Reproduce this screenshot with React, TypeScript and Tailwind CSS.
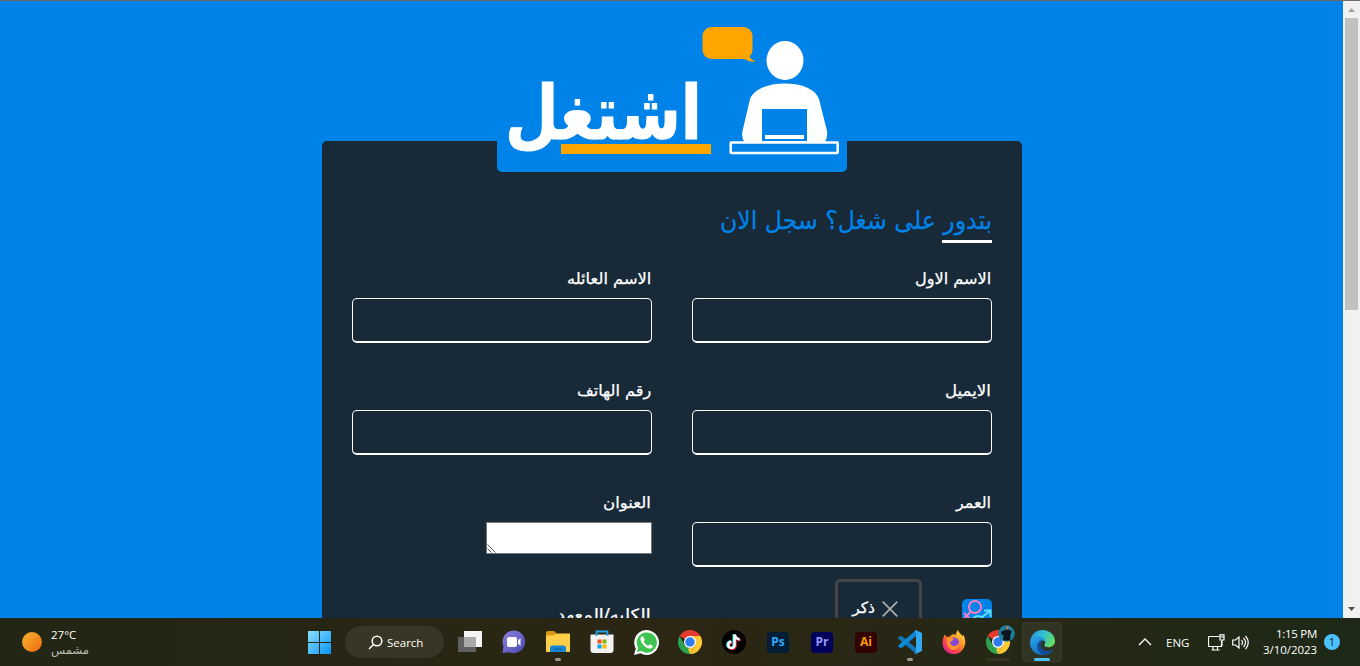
import { useLayoutEffect, useRef, useState, type ReactNode } from "react";

const arabic = "font-['DejaVu_Sans',sans-serif]";

/** Arabic line condensed horizontally so that it takes exactly `width` pixels. */
function ArabicText({ width, className = "", children }: { width: number; className?: string; children: ReactNode }) {
  const ref = useRef<HTMLSpanElement>(null);
  const [scale, setScale] = useState(1);
  useLayoutEffect(() => {
    if (ref.current) setScale(width / ref.current.offsetWidth);
  }, [width]);
  return (
    <span dir="rtl" className="flex justify-start" style={{ width }}>
      <span
        ref={ref}
        className={`inline-block shrink-0 origin-right whitespace-nowrap ${arabic} ${className}`}
        style={{ transform: `scaleX(${scale})` }}
      >
        {children}
      </span>
    </span>
  );
}

function Logo() {
  return (
    <svg width="350" height="171" viewBox="497 1 350 171" className="block">
      <rect x="702.500" y="27" width="50" height="32" rx="9" fill="#ffa500" />
      <path d="M743 58 Q748 62 756 62 Q751 60 748.500 55Z" fill="#ffa500" />
      <text
        x="505"
        y="139"
        textLength="197"
        lengthAdjust="spacingAndGlyphs"
        direction="ltr"
        className="font-['DejaVu_Sans',sans-serif]"
        fontSize="75"
        fontWeight="700"
        fill="#fff"
        stroke="#fff"
        strokeWidth="1"
        strokeLinejoin="round"
      >
        اشتغل
      </text>
      <rect x="561" y="144" width="150" height="10" fill="#ffa500" />
      <ellipse cx="785" cy="60.500" rx="18.500" ry="19.500" fill="#fff" />
      <path
        d="M745 143 Q741 138 742.500 131 L750 99 C754 89 768 83.500 785 83.500 C802 83.500 815 89 819 99 L827 131 Q828 138 824 143Z"
        fill="#fff"
      />
      <path d="M762 109h45v32h-45z" fill="#0083e8" />
      <path d="M765 135h39v4h-39z" fill="#fff" />
      <rect x="730.700" y="142.500" width="107" height="10.500" rx=".5" fill="#0083e8" stroke="#fff" strokeWidth="2.500" />
    </svg>
  );
}

function Label({ width, children }: { width: number; children: ReactNode }) {
  return (
    <label className="flex h-[37px] items-center pr-px text-white">
      <ArabicText width={width} className="text-[15.500px] leading-[37px] [-webkit-text-stroke:0.25px_white]">
        {children}
      </ArabicText>
    </label>
  );
}

function Field({ label, width }: { label: string; width: number }) {
  return (
    <div className="h-28">
      <Label width={width}>{label}</Label>
      <input className="block h-[45px] w-[300px] rounded-[5px] border border-b-2 border-white bg-transparent px-3 text-white outline-none" />
    </div>
  );
}

function GenderRow() {
  return (
    <div className="-mt-[18px] flex items-start">
      <svg width="30" height="30" viewBox="0 0 30 30" className="mt-5 shrink-0">
        <rect width="30" height="30" rx="5" fill="#0083e8" />
        <g fill="none" strokeWidth="2">
          <circle cx="13" cy="8" r="6" stroke="#f57fc0" />
          <path d="M9 12.500 2 19.500M2 14l6 6" stroke="#f57fc0" />
          <path d="M20 18 28 12M22 11.500h6.500v6.500" stroke="#5fe0ff" />
          <circle cx="16" cy="23" r="6" stroke="#5fe0ff" />
        </g>
      </svg>
      <div className="mr-10 flex h-[60px] w-[87px] items-center gap-[7px] rounded-[5px] border-[3px] border-[#444] pr-[21px] text-white">
        <svg width="16" height="16" viewBox="0 0 16 16" fill="none" stroke="#aaa" strokeWidth="1.800">
          <path d="M.7.7l14.600 14.600M15.300.7.7 15.300" />
        </svg>
        <ArabicText width={23} className="text-[15.500px] [-webkit-text-stroke:0.25px_white]">ذكر</ArabicText>
      </div>
    </div>
  );
}

function Page() {
  return (
    <main className="h-full min-w-0 flex-1 overflow-hidden bg-[#0083e8]">
      <div className="relative z-10 -mb-[31px] ml-[497px] w-[350px] overflow-hidden rounded-b-[5px] bg-[#0083e8]">
        <Logo />
      </div>
      <section dir="rtl" className="mr-[321px] ml-[322px] h-[600px] rounded-t-[5px] bg-[#182938] px-[30px] pt-[58px]">
        <h1 className="h-[44px] text-[#0083e8]">
          <ArabicText width={272} className="h-[41px] text-[25.500px] leading-[43px] [-webkit-text-stroke:0.25px_#0083e8]">
            بتدور على شغل؟ سجل الان
          </ArabicText>
          <span className="block h-[3px] w-[50px] bg-white" />
        </h1>
        <form className="flex gap-10 pt-[18px]">
          <div className="w-[300px]">
            <Field label="الاسم الاول" width={76} />
            <Field label="الايميل" width={46} />
            <Field label="العمر" width={35} />
            <GenderRow />
          </div>
          <div className="w-[300px]">
            <Field label="الاسم العائله" width={84} />
            <Field label="رقم الهاتف" width={74} />
            <div className="h-28">
              <Label width={48}>العنوان</Label>
              <div className="flex h-8 w-[166px] items-end justify-end border border-[#767676] bg-white">
                <svg width="9" height="9" viewBox="0 0 9 9" stroke="#555" strokeWidth="1">
                  <path d="M.5.5l8 8M.5 4.500l4 4" />
                </svg>
              </div>
            </div>
            <Field label="الكليه/المعهد" width={94} />
          </div>
        </form>
      </section>
    </main>
  );
}

function Scrollbar() {
  return (
    <div className="flex w-[17px] shrink-0 flex-col items-center bg-[#f1f1f1]">
      <svg width="17" height="17" viewBox="0 0 17 17" className="shrink-0">
        <path d="M5 11h7L8.500 7z" fill="#a3a3a3" />
      </svg>
      <div className="h-[292px] w-[13px] bg-[#c1c1c1]" />
      <svg width="17" height="17" viewBox="0 0 17 17" className="mt-auto shrink-0">
        <path d="M5 6h7L8.500 10z" fill="#505050" />
      </svg>
    </div>
  );
}

function Windows() {
  return (
    <svg width="24" height="24" viewBox="0 0 24 24">
      <defs>
        <linearGradient id="win" x1="0" y1="0" x2="1" y2="1">
          <stop stopColor="#8be0ff" />
          <stop offset="1" stopColor="#0794f5" />
        </linearGradient>
      </defs>
      <path fill="url(#win)" d="M1 1h11v11H1zM13 1h11v11H13zM1 13h11v11H1zM13 13h11v11H13z" />
    </svg>
  );
}

function TaskView() {
  return (
    <svg width="24" height="24" viewBox="0 0 24 24">
      <path d="M6 1h18v16H6z" fill="#f4f4f4" />
      <path d="M0 7h18v15H0z" fill="#606060" />
      <path d="M6 7h12v10H6z" fill="#a9a9a9" />
    </svg>
  );
}

function Chat() {
  return (
    <svg width="24" height="24" viewBox="0 0 24 24">
      <defs>
        <linearGradient id="chat" x1="0" y1="0" x2="1" y2="1">
          <stop stopColor="#8b80d8" />
          <stop offset=".5" stopColor="#6d66cc" />
          <stop offset="1" stopColor="#4446a5" />
        </linearGradient>
      </defs>
      <path d="M.5 23 1.500 16.500A11.300 11.300 0 1 1 7.500 22.300z" fill="url(#chat)" />
      <rect x="5" y="7" width="10" height="10" rx="2" fill="#fff" />
      <path d="M16 10.500 18.500 8v8L16 13.500z" fill="#fff" />
    </svg>
  );
}

function Explorer() {
  return (
    <svg width="26" height="24" viewBox="0 0 26 24">
      <path d="M1 3a2 2 0 0 1 2-2h6l2 2v4H1z" fill="#d99a13" />
      <path d="M1 5.500h8l2-2h14V21a1 1 0 0 1-1 1H2a1 1 0 0 1-1-1z" fill="#ffcf48" />
      <path d="M5 22v-4a2.500 2.500 0 0 1 2.500-2.500h11A2.500 2.500 0 0 1 21 18v4z" fill="#1685d4" />
      <path d="M9 18.500h8v1.500H9z" fill="#0867ac" />
    </svg>
  );
}

function Store() {
  return (
    <svg width="24" height="24" viewBox="0 0 24 24">
      <path d="M.5 4.500h23V20a3 3 0 0 1-3 3h-17a3 3 0 0 1-3-3z" fill="#f2f2f2" />
      <path d="M6.500 6V1.500h11V6" fill="none" stroke="#27a8ec" strokeWidth="1.800" />
      <path d="M7.500 9.500h4v4h-4z" fill="#f25022" />
      <path d="M12.500 9.500h4v4h-4z" fill="#7fba00" />
      <path d="M7.500 14.500h4v4h-4z" fill="#00a4ef" />
      <path d="M12.500 14.500h4v4h-4z" fill="#ffb900" />
    </svg>
  );
}

function WhatsApp() {
  return (
    <svg width="25" height="25" viewBox="0 0 24 24">
      <path d="M0 24l1.700-6.200A11.900 11.900 0 1 1 6.300 22.400z" fill="#fff" />
      <path d="M2.800 21.200l1.200-4.100A9.700 9.700 0 1 1 7 20.200z" fill="#3fc351" />
      <path
        d="M8.700 6.500c-.3-.6-.9-.6-1.300-.2C5.500 8 6 10.500 8.500 13.700c2.700 3.300 5.400 4.600 7.500 4 1.700-.5 2.300-2 1.900-2.700l-2.400-1.200c-.5-.2-.8.2-1.500 1.200-.4.400-3.800-1.700-4.600-3.800-.1-.4 1-1.200 1-1.900z"
        fill="#fff"
      />
    </svg>
  );
}

function Chrome() {
  return (
    <svg width="24" height="24" viewBox="0 0 24 24">
      <path d="M12 12 1.600 6A12 12 0 0 1 22.400 6z" fill="#e53b2e" />
      <path d="M12 6h10.400A12 12 0 0 1 12 24l5.200-9z" fill="#fcc934" />
      <path d="M1.600 6 6.800 15l6.400 3L12 24A12 12 0 0 1 1.600 6z" fill="#2da24e" />
      <path d="M17.200 15 12 24l-2-5z" fill="#fcc934" />
      <circle cx="12" cy="12" r="6" fill="#fff" />
      <circle cx="12" cy="12" r="4.700" fill="#2f7cf0" />
    </svg>
  );
}

function TikTok() {
  const note = "M12.600 4.500v10.400a3.200 3.200 0 1 1-3.200-3.200M12.600 4.500c.5 2.900 2.300 4.500 5 4.700";
  return (
    <svg width="24" height="24" viewBox="0 0 24 24" fill="none" strokeWidth="2.400">
      <circle cx="12" cy="12" r="12" fill="#000" />
      <path d={note} stroke="#25f4ee" transform="translate(-.9 -.2)" />
      <path d={note} stroke="#fe2c55" transform="translate(.9 .8)" />
      <path d={note} stroke="#fff" />
    </svg>
  );
}

function Adobe({ text, className }: { text: string; className: string }) {
  return (
    <span
      className={`flex h-[21px] w-[22px] items-center justify-center rounded-[4px] font-['Open_Sans',sans-serif] text-[12px] leading-none font-bold ${className}`}
    >
      {text}
    </span>
  );
}

function VSCode() {
  return (
    <svg width="24" height="24" viewBox="0 0 24 24">
      <path d="M.4 7.500 2 6.100l2 .2L18 18v5.800L.4 8.800z" fill="#1376bd" />
      <path d="M.4 16.500 2 17.900l2-.2L18 6V.2L.4 15.200z" fill="#0e89d4" />
      <path d="M17.500 0 24 3v18l-6.500 3-1-1 1.500-.8V1.800L16.500 1z" fill="#32a8f1" />
    </svg>
  );
}

function Firefox() {
  return (
    <svg width="24" height="24" viewBox="0 0 24 24">
      <defs>
        <linearGradient id="fox" x1="1" y1="0" x2="0.200" y2="1">
          <stop stopColor="#fff251" />
          <stop offset=".45" stopColor="#ff9324" />
          <stop offset=".75" stopColor="#ff3e52" />
          <stop offset="1" stopColor="#d62498" />
        </linearGradient>
      </defs>
      <path
        d="M2.500 4.500 5 7l3-.5C10 3 13 4.500 14 5c0-2 .5-4 2-5 1 3.500 3 3.500 4.500 6L21.500 5C25 12 23 18 19 21.500S8 25 4 21C.5 18 0 13 1 9z"
        fill="url(#fox)"
      />
      <circle cx="12" cy="12.500" r="5" fill="#8549dc" />
      <path d="M5 8c3-1 5 0 7 1l-2 2c-3 0-2 4 1 5 3 .500 5-1 6-3 1 5-3 7-6 7-5-.5-7-5-6-12z" fill="#ff9527" />
    </svg>
  );
}

function ChromeProfile() {
  return (
    <span className="relative">
      <Chrome />
      <svg width="17" height="17" viewBox="0 0 17 17" className="absolute -top-[5px] left-3">
        <circle cx="8.500" cy="8.500" r="8.300" fill="#1a7f9c" />
        <path d="M3.500 6 6 6l1-1.500h4l1 1.500 2-.500-1.500 4-.5 6h-7L5.500 10 3 9z" fill="#0c141c" />
        <path d="M8 1.500h2.500v3H8z" fill="#b97859" />
      </svg>
    </span>
  );
}

function Edge() {
  return (
    <svg width="25" height="25" viewBox="0 0 24 24">
      <defs>
        <linearGradient id="edgeTop" x1="0" y1=".2" x2="1" y2=".6">
          <stop stopColor="#2495dc" />
          <stop offset=".5" stopColor="#35c2ce" />
          <stop offset="1" stopColor="#65de60" />
        </linearGradient>
        <linearGradient id="edgeBottom" x1="0" y1="0" x2=".5" y2="1">
          <stop stopColor="#2ba5e8" />
          <stop offset="1" stopColor="#1270c8" />
        </linearGradient>
      </defs>
      <path d="M.3 9.500C1.500 4 6 0 12 0c7 0 12 5 12 10.500 0 4-3 6-6.500 6-2.500 0-4.500-1-3.500-2.500 2-3-1-7-6-7.300C4.500 6.700 2 7.500.3 9.500z" fill="url(#edgeTop)" />
      <path d="M0 12c0-4 3.500-6 7.500-6 4.500 0 7.500 3 7.300 6.300C14 10.500 12 9.500 10 10.500c-3 2-2.500 7 .5 9.500 3.500 2.500 8 1.500 12-.5C20.500 22 16.500 24 12 24 5 24 0 18.500 0 12z" fill="url(#edgeBottom)" />
      <path d="M10.500 10.200C5 12 5.500 21 13 24c4-.3 7.500-2 9.300-5-.3-.3-.8-.2-1.300.1-5.500 2.400-10.500-.6-10.800-4.600-.1-1.300.3-2.300 1-3.200z" fill="#124c95" />
    </svg>
  );
}

function TaskItem({ children, mark, active }: { children: ReactNode; mark?: "dot" | "dim" | "bar"; active?: boolean }) {
  return (
    <div className="relative flex h-12 w-11 items-center justify-center">
      {active && <span className="absolute inset-x-0.5 top-1 bottom-1 rounded border border-white/4 bg-white/6" />}
      <span className="relative flex">{children}</span>
      {mark === "dot" && <span className="absolute bottom-[5px] left-[19px] h-[3px] w-[6px] rounded-full bg-[#a09c94]" />}
      {mark === "dim" && <span className="absolute bottom-[5px] left-[10px] h-[3px] w-6 rounded-full bg-[#38331f]" />}
      {mark === "bar" && <span className="absolute bottom-[5px] left-[14px] h-[3px] w-4 rounded-full bg-[#4cc2ff]" />}
    </div>
  );
}

function Taskbar() {
  return (
    <footer className="relative z-20 flex h-12 shrink-0 items-center bg-linear-to-r from-[#222615] via-[#2c2614] to-[#1e2917] font-['Open_Sans',sans-serif] text-white">
      <div className="flex w-[297px] items-center pl-[22px]">
        <span className="size-5 rounded-full bg-linear-to-br from-[#f5b52e] to-[#ef6410]" />
        <div className="ml-[9px] pt-px text-[11.500px] leading-4">
          <div>27°C</div>
          <div className="text-[#bfc0b8]">
            <ArabicText width={38} className="text-[11px]">مشمس</ArabicText>
          </div>
        </div>
      </div>
      <TaskItem><Windows /></TaskItem>
      <div className="mx-1 flex h-8 w-[99px] items-center rounded-full bg-[#3a3626] pt-px pl-[23px] text-[11.500px]">
        <svg width="15" height="15" viewBox="0 0 15 15" fill="none" stroke="#fff" strokeWidth="1.500" className="mr-1">
          <circle cx="9" cy="6" r="4.800" />
          <path d="M5.500 9.500 1 14" />
        </svg>
        Search
      </div>
      <TaskItem><TaskView /></TaskItem>
      <TaskItem><Chat /></TaskItem>
      <TaskItem mark="dot"><Explorer /></TaskItem>
      <TaskItem><Store /></TaskItem>
      <TaskItem><WhatsApp /></TaskItem>
      <TaskItem><Chrome /></TaskItem>
      <TaskItem><TikTok /></TaskItem>
      <TaskItem><Adobe text="Ps" className="bg-[#001e36] text-[#31a8ff]" /></TaskItem>
      <TaskItem><Adobe text="Pr" className="bg-[#00005b] text-[#9999ff]" /></TaskItem>
      <TaskItem><Adobe text="Ai" className="bg-[#330000] text-[#ff9a00]" /></TaskItem>
      <TaskItem mark="dot"><VSCode /></TaskItem>
      <TaskItem><Firefox /></TaskItem>
      <TaskItem mark="dim"><ChromeProfile /></TaskItem>
      <TaskItem active mark="bar"><Edge /></TaskItem>
      <div className="ml-auto flex items-center pr-5 text-[11.500px]">
        <svg width="14" height="8" viewBox="0 0 14 8" fill="none" stroke="#fff" strokeWidth="1.300">
          <path d="M1 7l6-6 6 6" />
        </svg>
        <span className="ml-[14px] w-6 pt-px">ENG</span>
        <svg width="17" height="17" viewBox="0 0 17 17" fill="none" stroke="#fff" strokeWidth="1.200" className="ml-[18px]">
          <path d="M11 2.500H1.500a1 1 0 0 0-1 1v8a1 1 0 0 0 1 1h12V7M5 12.500V16M9.500 12.500V16M3.500 16h8M12 .8h4V6h-4zM12 3h4M14 6v6" />
        </svg>
        <svg width="17" height="15" viewBox="0 0 17 15" fill="none" stroke="#fff" strokeWidth="1.200" className="ml-[7px]">
          <path d="M.7 5v5h2.800L7 13V2L3.500 5zM9.500 5q2 2.500 0 5M11.500 3q4 4.500 0 9M13.500 1q5.500 6.500 0 13" />
        </svg>
        <div className="ml-[8px] flex w-[60px] flex-col items-end text-[11.500px] leading-4 whitespace-nowrap">
          <span className="tracking-[-0.300px]">1:15 PM</span>
          <span className="tracking-[-0.050px]">3/10/2023</span>
        </div>
        <span className="ml-[7px] flex size-4 items-center justify-center rounded-full bg-[#4cc2ff] text-[11px] text-[#12202a]">1</span>
      </div>
    </footer>
  );
}

export default function App() {
  return (
    <div className="flex h-[666px] w-[1360px] flex-col overflow-hidden">
      <div className="h-px shrink-0 bg-[#6d6a66]" />
      <div className="flex h-[617px]">
        <Page />
        <Scrollbar />
      </div>
      <Taskbar />
    </div>
  );
}
